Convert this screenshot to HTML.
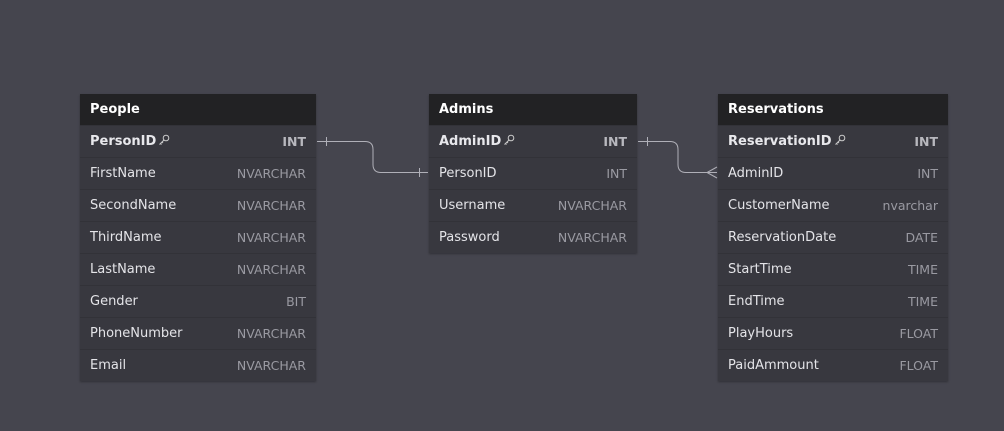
<!DOCTYPE html><html><head><style>
body{margin:0;width:1004px;height:431px;background:#45454e;font-family:"DejaVu Sans","Liberation Sans",sans-serif;overflow:hidden;position:relative}
.t{position:absolute;background:#38383f;box-shadow:0 1px 2px rgba(0,0,0,.3)}
.h{height:31px;background:#222224;color:#fff;font-weight:bold;font-size:13px;line-height:32px;padding-left:10px}
.r{height:32px;box-sizing:border-box;border-top:1px solid #323238;display:flex;justify-content:space-between;align-items:center;padding:0 10px;font-size:13px;color:#e4e4e8}
.r span:last-child{color:#9a9aa2;font-size:12.5px}
.r.pk{font-weight:bold;color:#e8e8ec}.r.pk span:last-child{color:#b8b8be;font-weight:bold}
.r svg{vertical-align:-1px;margin-left:2px}
</style></head><body>
<svg width="1004" height="431" style="position:absolute;left:0;top:0">
<g fill="none" stroke="#b0b0b8" stroke-width="1">
<path d="M317 141.5H365Q373 141.5 373 149.5V164.5Q373 172.5 381 172.5H428"/>
<path d="M326.5 137v9M419.5 168v9"/>
<path d="M638 141.5H670Q678 141.5 678 149.5V164.5Q678 172.5 686 172.5H717"/>
<path d="M647.5 137v9M717 167L707 172.5L717 178"/>
</g></svg>
<div class="t" style="left:80px;top:94px;width:236px">
<div class="h">People</div>
<div class="r pk"><span>PersonID<svg width="12" height="12" viewBox="0 0 12 12" fill="none" stroke="#ccc" stroke-width="1"><circle cx="8" cy="4" r="2.8"/><path d="M6 6L1.5 10.5M2.5 9.5l1 1M4 8l1 1"/></svg></span><span>INT</span></div>
<div class="r"><span>FirstName</span><span>NVARCHAR</span></div>
<div class="r"><span>SecondName</span><span>NVARCHAR</span></div>
<div class="r"><span>ThirdName</span><span>NVARCHAR</span></div>
<div class="r"><span>LastName</span><span>NVARCHAR</span></div>
<div class="r"><span>Gender</span><span>BIT</span></div>
<div class="r"><span>PhoneNumber</span><span>NVARCHAR</span></div>
<div class="r"><span>Email</span><span>NVARCHAR</span></div>
</div>
<div class="t" style="left:429px;top:94px;width:208px">
<div class="h">Admins</div>
<div class="r pk"><span>AdminID<svg width="12" height="12" viewBox="0 0 12 12" fill="none" stroke="#ccc" stroke-width="1"><circle cx="8" cy="4" r="2.8"/><path d="M6 6L1.5 10.5M2.5 9.5l1 1M4 8l1 1"/></svg></span><span>INT</span></div>
<div class="r"><span>PersonID</span><span>INT</span></div>
<div class="r"><span>Username</span><span>NVARCHAR</span></div>
<div class="r"><span>Password</span><span>NVARCHAR</span></div>
</div>
<div class="t" style="left:718px;top:94px;width:230px">
<div class="h">Reservations</div>
<div class="r pk"><span>ReservationID<svg width="12" height="12" viewBox="0 0 12 12" fill="none" stroke="#ccc" stroke-width="1"><circle cx="8" cy="4" r="2.8"/><path d="M6 6L1.5 10.5M2.5 9.5l1 1M4 8l1 1"/></svg></span><span>INT</span></div>
<div class="r"><span>AdminID</span><span>INT</span></div>
<div class="r"><span>CustomerName</span><span>nvarchar</span></div>
<div class="r"><span>ReservationDate</span><span>DATE</span></div>
<div class="r"><span>StartTime</span><span>TIME</span></div>
<div class="r"><span>EndTime</span><span>TIME</span></div>
<div class="r"><span>PlayHours</span><span>FLOAT</span></div>
<div class="r"><span>PaidAmmount</span><span>FLOAT</span></div>
</div>
</body></html>
